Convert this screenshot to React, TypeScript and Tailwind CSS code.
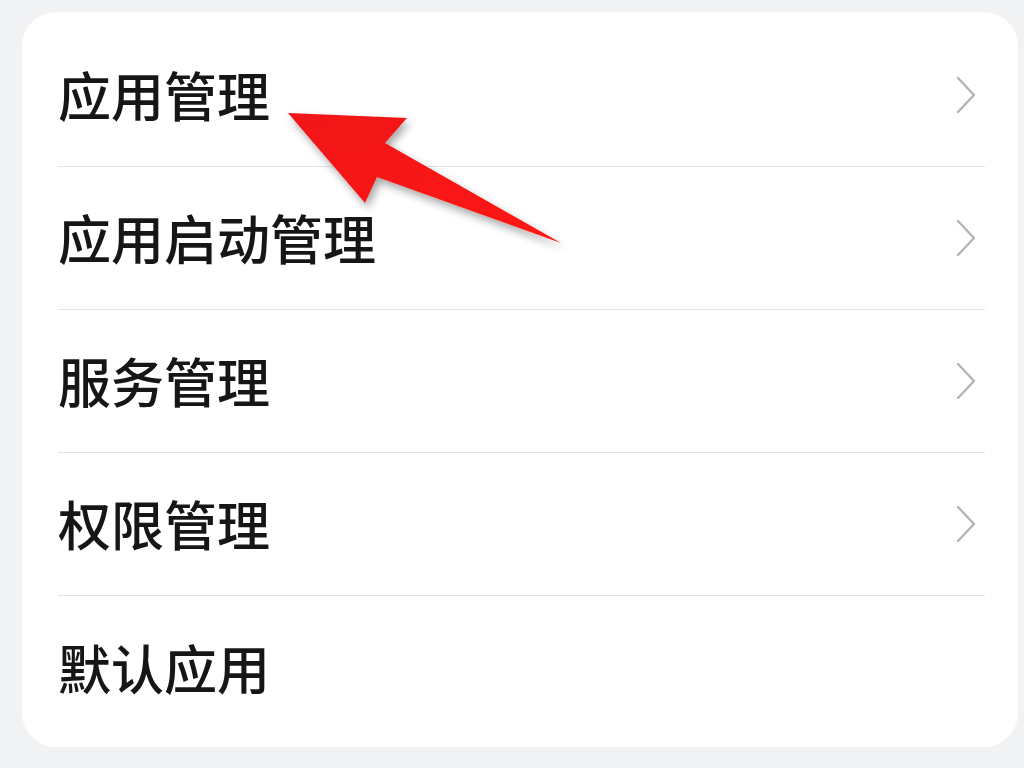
import React from 'react';

const items = [
  { label: '应用管理', chevron: true },
  { label: '应用启动管理', chevron: true },
  { label: '服务管理', chevron: true },
  { label: '权限管理', chevron: true },
  { label: '默认应用', chevron: false },
];

function Chevron() {
  return (
    <svg width="22" height="38" viewBox="0 0 22 38" fill="none" className="shrink-0">
      <path d="M3 2 L19 19 L3 36" stroke="#b4b4b6" strokeWidth="2.4" strokeLinecap="round" strokeLinejoin="round" />
    </svg>
  );
}

function RedArrow() {
  return (
    <svg
      width="1024"
      height="768"
      viewBox="0 0 1024 768"
      className="absolute left-0 top-0 pointer-events-none"
    >
      <defs>
        <filter id="shadow" x="-20%" y="-20%" width="140%" height="140%">
          <feDropShadow dx="3" dy="5" stdDeviation="4" floodColor="#000" floodOpacity="0.35" />
        </filter>
        <linearGradient id="red" x1="0" y1="0" x2="1" y2="1">
          <stop offset="0" stopColor="#f0141a" />
          <stop offset="1" stopColor="#ff1a12" />
        </linearGradient>
      </defs>
      <polygon
        points="288,113 407,118 385,143 561,243 377,177 365,203"
        fill="url(#red)"
        filter="url(#shadow)"
      />
    </svg>
  );
}

export default function App() {
  return (
    <div
      className="relative w-[1024px] h-[768px] overflow-hidden bg-[#f1f2f4] pl-[22px] pr-[6px] pt-[12px] pb-[21px]"
      style={{ fontFamily: '"Noto Sans CJK SC", "Noto Sans", sans-serif' }}
    >
      <div className="h-full bg-white rounded-[34px] pt-[12px] pl-[36px] pr-[33px]">
        {items.map((item, i) => (
          <div
            key={item.label}
            className={`h-[143px] flex items-center justify-between ${i < items.length - 1 ? 'border-b border-[#e4e4e6]' : ''}`}
          >
            <span className="text-[53px] leading-none font-medium text-[#161616] -mt-[1px]">{item.label}</span>
            {item.chevron ? <div className="mr-[8px]"><Chevron /></div> : null}
          </div>
        ))}
      </div>
      <RedArrow />
    </div>
  );
}
